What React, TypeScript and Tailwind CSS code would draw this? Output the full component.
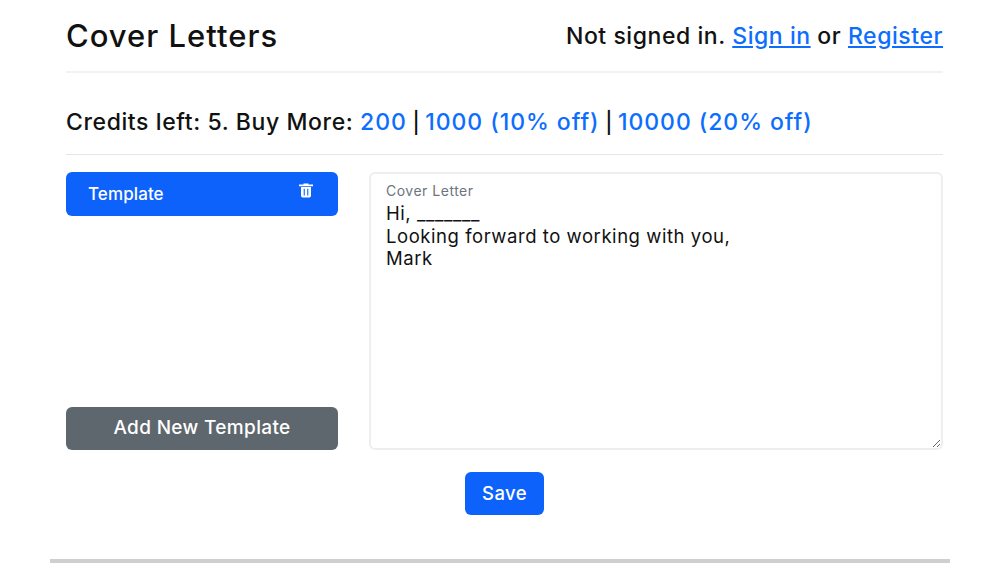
export default function App() {
  return (
    <div className="h-[563px] w-[1000px] overflow-hidden bg-white font-['Inter',sans-serif] text-[#111]">
      <div className="ml-[66px] mr-[57px] h-[559px]">
        {/* Header */}
        <header className="flex h-[73px] items-center justify-between border-b-2 border-[#f0f2f3] pt-[1px]">
          <h1 className="text-[31px] font-medium tracking-[1px]">Cover Letters</h1>
          <p className="text-[23px] font-medium tracking-[0.56px]">
            Not signed in. <a className="text-[#0d6efd] underline" href="#">Sign in</a> or{" "}
            <a className="text-[#0d6efd] underline" href="#">Register</a>
          </p>
        </header>

        {/* Credits */}
        <div className="flex h-[82px] items-start border-b border-[#e3e5e8] pt-[33px] text-[23px] font-medium leading-[32px] tracking-[0.6px]">
          <span>
            Credits left: 5. Buy More: <a className="tracking-[0.95px] text-[#0d6efd]" href="#">200</a>
            <span className="text-[21px] tracking-normal"> | </span>
            <a className="tracking-[0.95px] text-[#0d6efd]" href="#">1000 (10% off)</a>
            <span className="text-[21px] tracking-normal"> | </span>
            <a className="tracking-[0.95px] text-[#0d6efd]" href="#">10000 (20% off)</a>
          </span>
        </div>

        <div className="mt-[17px] flex gap-[31px]">
          <div className="flex h-[278px] w-[272px] flex-col justify-between">
            <div className="flex h-[44px] items-start justify-between rounded-[6px] bg-[#0d62fb] pl-[22px] pr-[24px] text-white">
              <span className="mt-[11px] text-[17px] font-medium leading-[22px] tracking-[0.1px]">Template</span>
              <svg className="mt-[10px]" width="16" height="17" viewBox="0 0 16 16" fill="currentColor">
                <path d="M5.500 1h5v1h4.500v1.700H1V2h4.500z" />
                <path fillRule="evenodd" d="M3 4.500h10v8.800a1.700 1.700 0 0 1-1.700 1.700H4.700A1.700 1.700 0 0 1 3 13.300zM5.700 6.300v6.800h1.100V6.300zm3.500 0v6.800h1.100V6.300z" />
              </svg>
            </div>
            <button className="h-[43px] rounded-[6px] bg-[#5f676e] text-[19px] font-medium tracking-[0.35px] text-white">
              Add New Template
            </button>
          </div>

          <div className="flex h-[278px] flex-1 flex-col rounded-[6px] border-2 border-[#eceef0]">
            <label className="ml-[15px] mt-[9px] text-[14px] leading-[16px] tracking-[0.5px] text-[#6c757d]">Cover Letter</label>
            <textarea
              className="mt-[3px] flex-1 resize-y bg-transparent pl-[15px] pr-[8px] text-[18.5px] leading-[22.5px] tracking-[0.55px] outline-none"
              defaultValue={"Hi, _______\nLooking forward to working with you,\nMark"}
            />
          </div>
        </div>

        <div className="mt-[22px] flex justify-center pl-[9px] pr-[9px]">
          <button className="h-[43px] w-[79px] rounded-[6px] bg-[#0d62fb] text-[18.5px] font-medium tracking-[0.4px] text-white">
            Save
          </button>
        </div>
      </div>
      <div className="mx-[50px] h-[4px] bg-[#cfcfcf]" />
    </div>
  );
}
